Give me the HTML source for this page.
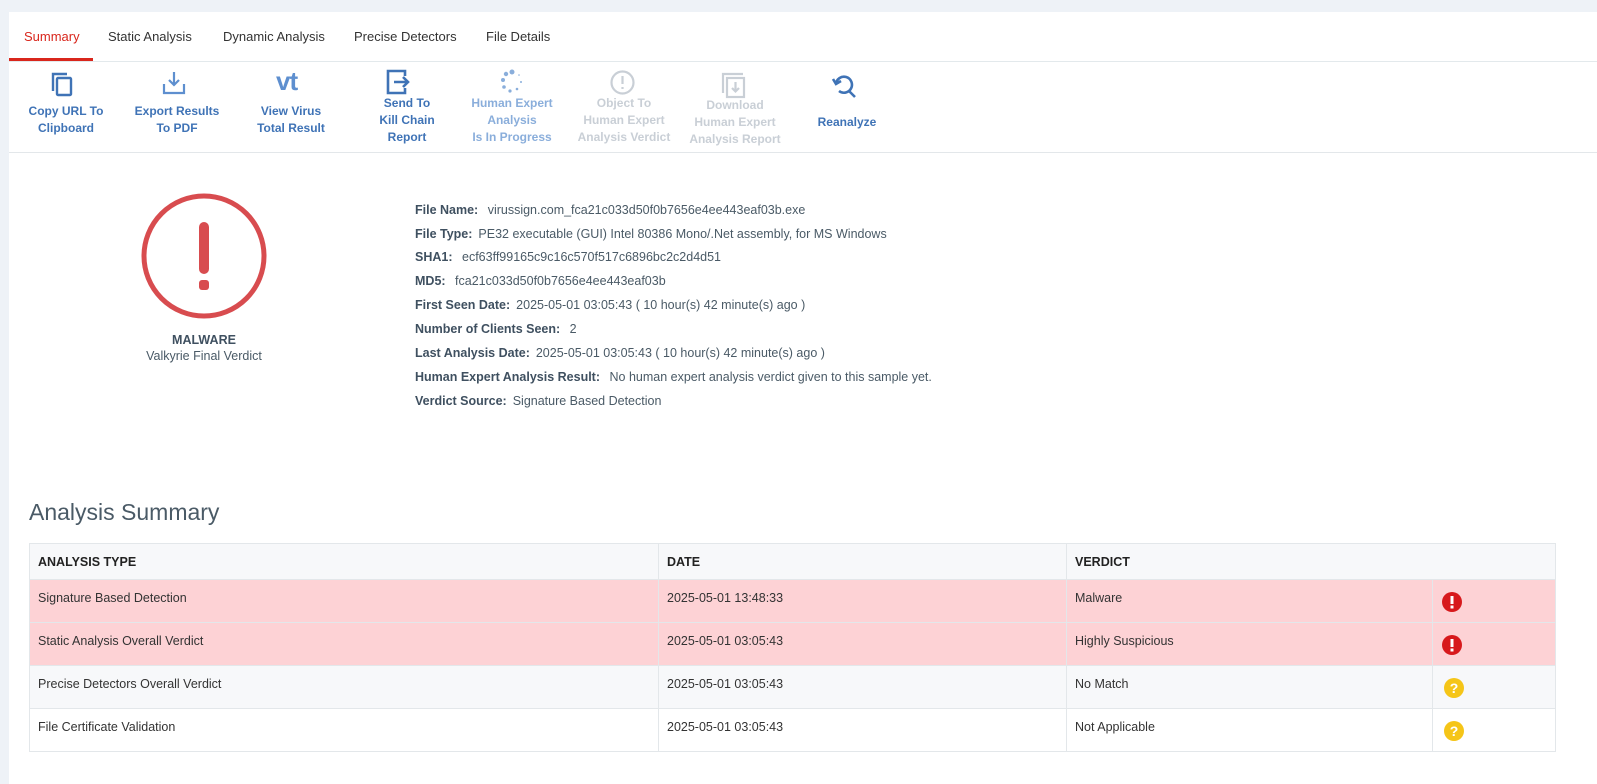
<!DOCTYPE html>
<html><head><meta charset="utf-8"><style>
*{margin:0;padding:0;box-sizing:border-box}
body{width:1597px;height:784px;background:#eef2f7;font-family:"Liberation Sans",Arial,sans-serif;position:relative;overflow:hidden}
.card{position:absolute;left:9px;top:12px;right:0;bottom:0;background:#fff}
.tab{position:absolute;top:29px;font-size:13px;color:#333}
.tb{position:absolute;top:62px;text-align:center;font-size:12px;font-weight:bold;color:#3f73b6;line-height:17px}
.tb.dis{color:#c9cfd6}
.tb.mid{color:#8aaedb}
.lbl{position:absolute;left:415px;font-size:12.5px;color:#4a5a66}
.lbl b{color:#3f5060;margin-right:6px}
table{position:absolute;left:29px;top:543px;width:1527px;border-collapse:collapse;font-size:12.5px;color:#333}
td,th{border:1px solid #e3e7ea;text-align:left;vertical-align:top;padding:0 8px}
th{height:36px;vertical-align:middle;background:#f7f8fa;font-size:12.5px;color:#222}
td{height:43px;padding-top:11px}
.red td{background:#fdd2d5}
.g td{background:#f7f8fa}
</style></head><body>
<div class="card"></div>
<div class="tab" style="left:24px;color:#d9261c">Summary</div>
<div class="tab" style="left:108px">Static Analysis</div>
<div class="tab" style="left:223px">Dynamic Analysis</div>
<div class="tab" style="left:354px">Precise Detectors</div>
<div class="tab" style="left:486px">File Details</div>
<div style="position:absolute;left:9px;top:58px;width:84px;height:3px;background:#d9261c"></div>
<div style="position:absolute;left:9px;top:61px;right:0;height:1px;background:#e3e9ec"></div>
<div style="position:absolute;left:9px;top:152px;right:0;height:1px;background:#e3e7ea"></div>

<svg style="position:absolute;left:48px;top:70px" width="28" height="28" viewBox="0 0 28 28" fill="none" stroke="#3f73b6" stroke-width="2.4"><path d="M5 21V4h14"/><rect x="9" y="8" width="14" height="17" rx="1"/></svg>
<div class="tb" style="left:25px;width:82px;top:103px">Copy URL To<br>Clipboard</div>
<svg style="position:absolute;left:160px;top:69px" width="28" height="28" viewBox="0 0 28 28" fill="none" stroke="#5e8fcf" stroke-width="2.2"><path d="M4 15v9h20v-9"/><path d="M14 3v13M9 11l5 5 5-5"/></svg>
<div class="tb" style="left:130px;width:94px;top:103px">Export Results<br>To PDF</div>
<div style="position:absolute;left:276px;top:66px;font-size:26px;font-weight:bold;color:#5e8fcf;letter-spacing:-1px">vt</div>
<div class="tb" style="left:250px;width:82px;top:103px">View Virus<br>Total Result</div>
<svg style="position:absolute;left:385px;top:68px" width="28" height="28" viewBox="0 0 28 28" fill="none" stroke="#3f73b6" stroke-width="2.6"><path d="M20 8V3H3v22h17v-5"/><path d="M9 14h14M18 9l5 5-5 5"/></svg>
<div class="tb" style="left:366px;width:82px;top:95px">Send To<br>Kill Chain<br>Report</div>
<svg style="position:absolute;left:498px;top:68px" width="28" height="28" viewBox="0 0 28 28" fill="#8aaedb"><circle cx="14" cy="4" r="2.5"/><circle cx="8" cy="6" r="2.2"/><circle cx="5" cy="12" r="2"/><circle cx="6" cy="19" r="1.8"/><circle cx="12" cy="23" r="1.6"/><circle cx="19" cy="21" r="1.3"/><circle cx="23" cy="14" r="1"/><circle cx="21" cy="7" r=".8"/></svg>
<div class="tb mid" style="left:468px;width:88px;top:95px">Human Expert<br>Analysis<br>Is In Progress</div>
<svg style="position:absolute;left:609px;top:69px" width="27" height="27" viewBox="0 0 27 27" fill="none" stroke="#c9cfd6" stroke-width="2.2"><circle cx="13.5" cy="13.5" r="11"/><path d="M13.5 7v8M13.5 18v2"/></svg>
<div class="tb dis" style="left:576px;width:96px;top:95px">Object To<br>Human Expert<br>Analysis Verdict</div>
<svg style="position:absolute;left:720px;top:71px" width="28" height="28" viewBox="0 0 28 28" fill="none" stroke="#c9cfd6" stroke-width="2.2"><path d="M3 22V3h20"/><rect x="7" y="7" width="17" height="19"/><path d="M15.5 11v9M12 17l3.5 3.5 3.5-3.5"/></svg>
<div class="tb dis" style="left:686px;width:98px;top:97px">Download<br>Human Expert<br>Analysis Report</div>
<svg style="position:absolute;left:830px;top:71px" width="30" height="30" viewBox="0 0 30 30" fill="none" stroke="#3f73b6" stroke-width="2.6"><path d="M6 13a8 8 0 1 1 3 7"/><path d="M3 8l3 5 5-3"/><path d="M19 20l6 6"/></svg>
<div class="tb" style="left:810px;width:74px;top:114px">Reanalyze</div>

<svg style="position:absolute;left:140px;top:192px" width="130" height="130" viewBox="0 0 130 130"><circle cx="64" cy="64" r="60" fill="none" stroke="#d84c4f" stroke-width="5"/><rect x="59" y="30" width="10" height="52" rx="5" fill="#d84c4f"/><rect x="59" y="88" width="10" height="10" rx="3" fill="#d84c4f"/></svg>
<div style="position:absolute;left:104px;top:333px;width:200px;text-align:center;font-size:12.5px;font-weight:bold;color:#3f5060">MALWARE</div>
<div style="position:absolute;left:104px;top:349px;width:200px;text-align:center;font-size:12.5px;color:#4a5a66">Valkyrie Final Verdict</div>

<div class="lbl" style="top:203px"><b>File Name:</b> virussign.com_fca21c033d50f0b7656e4ee443eaf03b.exe</div>
<div class="lbl" style="top:227px"><b>File Type:</b>PE32 executable (GUI) Intel 80386 Mono/.Net assembly, for MS Windows</div>
<div class="lbl" style="top:250px"><b>SHA1:</b> ecf63ff99165c9c16c570f517c6896bc2c2d4d51</div>
<div class="lbl" style="top:274px"><b>MD5:</b> fca21c033d50f0b7656e4ee443eaf03b</div>
<div class="lbl" style="top:298px"><b>First Seen Date:</b>2025-05-01 03:05:43 ( 10 hour(s) 42 minute(s) ago )</div>
<div class="lbl" style="top:322px"><b>Number of Clients Seen:</b> 2</div>
<div class="lbl" style="top:346px"><b>Last Analysis Date:</b>2025-05-01 03:05:43 ( 10 hour(s) 42 minute(s) ago )</div>
<div class="lbl" style="top:370px"><b>Human Expert Analysis Result:</b> No human expert analysis verdict given to this sample yet.</div>
<div class="lbl" style="top:394px"><b>Verdict Source:</b>Signature Based Detection</div>

<div style="position:absolute;left:29px;top:499px;font-size:23px;color:#4a5a66">Analysis Summary</div>
<table>
<tr><th style="width:629px">ANALYSIS TYPE</th><th style="width:408px">DATE</th><th colspan="2">VERDICT</th></tr>
<tr class="red"><td>Signature Based Detection</td><td>2025-05-01 13:48:33</td><td style="width:366px">Malware</td><td><svg width="22" height="22" style="margin-top:0"><circle cx="11" cy="11" r="10" fill="#d7191c"/><rect x="9.5" y="5" width="3" height="8" fill="#fff"/><rect x="9.5" y="14.5" width="3" height="3" fill="#fff"/></svg></td></tr>
<tr class="red"><td>Static Analysis Overall Verdict</td><td>2025-05-01 03:05:43</td><td>Highly Suspicious</td><td><svg width="22" height="22"><circle cx="11" cy="11" r="10" fill="#d7191c"/><rect x="9.5" y="5" width="3" height="8" fill="#fff"/><rect x="9.5" y="14.5" width="3" height="3" fill="#fff"/></svg></td></tr>
<tr class="g"><td>Precise Detectors Overall Verdict</td><td>2025-05-01 03:05:43</td><td>No Match</td><td><svg width="22" height="22" style="margin-left:2px"><circle cx="11" cy="11" r="10" fill="#f5c518"/><text x="11" y="16" text-anchor="middle" font-family="Liberation Sans" font-weight="bold" font-size="14" fill="#fff">?</text></svg></td></tr>
<tr><td>File Certificate Validation</td><td>2025-05-01 03:05:43</td><td>Not Applicable</td><td><svg width="22" height="22" style="margin-left:2px"><circle cx="11" cy="11" r="10" fill="#f5c518"/><text x="11" y="16" text-anchor="middle" font-family="Liberation Sans" font-weight="bold" font-size="14" fill="#fff">?</text></svg></td></tr>
</table>
</body></html>
